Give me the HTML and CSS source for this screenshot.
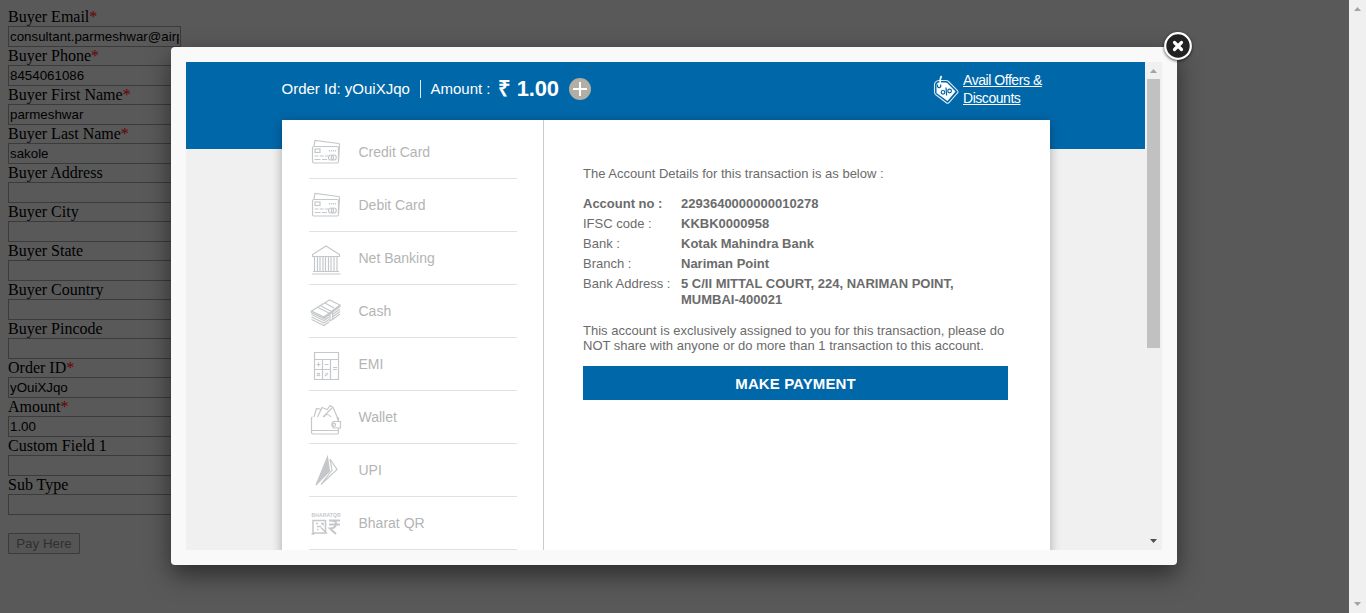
FILE: index.html
```html
<!DOCTYPE html>
<html lang="en">
<head>
<meta charset="utf-8">
<title>Payment</title>
<link rel="stylesheet" href="styles.css">
</head>
<body>
<div class="page">
  <form class="buyer">
    <label>Buyer Email<i>*</i></label><div class="input"><span>consultant.parmeshwar@airp</span></div>
    <label>Buyer Phone<i>*</i></label><div class="input"><span>8454061086</span></div>
    <label>Buyer First Name<i>*</i></label><div class="input"><span>parmeshwar</span></div>
    <label>Buyer Last Name<i>*</i></label><div class="input"><span>sakole</span></div>
    <label>Buyer Address</label><div class="input"></div>
    <label>Buyer City</label><div class="input"></div>
    <label>Buyer State</label><div class="input"></div>
    <label>Buyer Country</label><div class="input"></div>
    <label>Buyer Pincode</label><div class="input"></div>
    <label>Order ID<i>*</i></label><div class="input"><span>yOuiXJqo</span></div>
    <label>Amount<i>*</i></label><div class="input"><span>1.00</span></div>
    <label>Custom Field 1</label><div class="input"></div>
    <label>Sub Type</label><div class="input"></div>
    <div class="pay">Pay Here</div>
  </form>
  <div class="scrollbar page-scroll">
    <svg width="17" height="17"><path d="M5 11h7L8.500 7z" fill="#a3a3a3"/></svg>
    <svg width="17" height="17"><path d="M5 6h7L8.500 10z" fill="#a3a3a3"/></svg>
  </div>
</div>

<div class="modal">
  <svg class="close" width="36" height="36" viewBox="0 0 36 36">
    <circle cx="18" cy="18" r="12.800" fill="#222" stroke="#fff" stroke-width="2.200"/>
    <path d="M14.500 14.500l7 7m0-7l-7 7" stroke="#fff" stroke-width="3.200" stroke-linecap="round"/>
  </svg>
  <div class="frame">
    <div class="view">
      <header class="top">
        <div class="order">
          <span class="oid">Order Id: yOuiXJqo</span>
          <span class="amt">Amount :</span>
          <b>₹ 1.00</b>
          <svg width="22" height="22" viewBox="0 0 22 22"><circle cx="11" cy="11" r="11" fill="#b1aea5"/><path d="M11 4v14M4 11h14" stroke="#fff" stroke-width="2"/></svg>
        </div>
        <div class="offers">
          <svg width="26" height="30" viewBox="0 0 26 30">
            <path d="M1.500 9.500q0-3 4-4l7.500 0q1.500 0 2.500 1l9 9q1 1.500 0 2.500l-8.500 9.500q-1.500 1.500-3 0L2.500 19.500q-1-1-1-2.500z" fill="none" stroke="#d5e7f3" stroke-width="1.100"/>
            <path d="M3.500 10q0-2 2-2.500h7q1.200 0 2 .8l8 8.200-8 9.500-11-8z" fill="#fff"/>
            <path d="M4.500 9.500v2.200q1.500 2 3.200 0V9.500" fill="none" stroke="#0067a9" stroke-width="1.200"/>
            <path d="M8.500 1Q6.500 4 7.500 9" fill="none" stroke="#fff" stroke-width="1.600"/>
            <g fill="none" stroke="#0067a9" stroke-width="1.200"><circle cx="10" cy="17.300" r="1.800"/><circle cx="16.600" cy="16" r="1.800"/><path d="M13 12.500l.6 8"/></g>
          </svg>
          <a>Avail Offers &amp;<br>Discounts</a>
        </div>
      </header>
      <main class="card">
        <ul class="methods">
          <li><svg class="ic" viewBox="0 0 32 32"><use href="#cards"/></svg>Credit Card</li>
          <li><svg class="ic" viewBox="0 0 32 32"><g id="cards"><path d="M4 10L5 4.300 28.500 7.500q1.300.3 1 1.500L28.500 24"/><rect x="2.500" y="10.500" width="26" height="16.500" rx="1.500"/><rect x="5" y="13" width="5" height="3.500"/><path d="M19.500 14v1.500m2-1.500v1.500m2-1.500v1.500m2-1.500v1.500M4.500 20h4m1.200 0h4m1.200 0h3M4.500 23.500h6m1.500 0h5"/><circle cx="21" cy="21.500" r="2.500"/><circle cx="23.800" cy="21.500" r="2.500"/></g></svg>Debit Card</li>
          <li><svg class="ic low" viewBox="0 0 32 32"><path d="M2.500 13.500V11.500L16 3l13.500 8.500v2zM4.500 14v14m3-14v14m2.500-14v14m3-14v14m2.500-14v14m3-14v14m2.500-14v14m3-14v14m3-14v14M3 28.500h26M2 31h28.500"/></svg>Net Banking</li>
          <li><svg class="ic low" viewBox="0 0 32 32"><path d="M1.500 15L19.500 4l10.500 5-16 12zM1.500 15v1.500l12.500 6 16-12V9M1.500 18.500l12.500 6 5-3.500M1.500 21l12.500 6 5-3.500M1.500 23.500l12.500 6 5-3.500M22.500 18.500L30 13M22.500 21L30 15.500M22.500 23.500L30 18M8 11.500l12 6V25l2.500-1.500V16L11 10m4-3l9 5"/></svg>Cash</li>
          <li><svg class="ic low" viewBox="0 0 32 32"><path d="M4.500 3.500h24v27h-24zM4.500 10.500h24M4.500 20.500h16M12.500 10.500v20m8-20v20M6.500 15.500h4m-2-2v4m6-2h4m4.500 3h4m-4 2h4M7 24l3 3m0-3l-3 3m8 0l3-3m-3 0h.6m2 3h.6"/></svg>EMI</li>
          <li><svg class="ic lower" viewBox="0 0 32 32"><path d="M2.500 14q-1 0-1 1.500v14q0 1.500 1.500 1.500h24q1.500 0 1.500-1.500V25.500m0-7v-3q0-1.500-1.500-1.500zM23.500 18.500h7v6.500h-7q-3.500-3.200 0-6.500zM4 14L6.500 5.500l5.500 1M7.500 14l4.500-9.500 5 2M17 7l3-4.500 3 2 4 9M13 14L22 5M14 14q3-5 7 0M2 27.500h26"/><circle cx="24" cy="21.800" r="1.500"/></svg>Wallet</li>
          <li><svg class="ic" viewBox="0 0 32 32"><path d="M17.500 3L19.500 17 6 31z" class="solid"/><path d="M20 5l7 10.500L11 30.500M20 5l2 11-11 14.500"/></svg>UPI</li>
          <li><svg class="ic lowest" viewBox="0 0 32 32"><text x="1.500" y="5.500" textLength="29" class="qr">BHARATQR</text><g stroke-width="1.500"><path d="M3 9.500h12.500V22H3zM6 12.500h2m3 0h2v2m-6 1h4m-4 3h1.500m2.500-2l6 6M1.500 23h3"/></g><path stroke-width="2" d="M19 9.500h11M19 13.500h11M20 9.500q7 0 6 4t-6 4l6 5.500"/></svg>Bharat QR</li>
        </ul>
        <section class="details">
          <p class="intro">The Account Details for this transaction is as below :</p>
          <dl>
            <dt class="strong">Account no :</dt><dd>2293640000000010278</dd>
            <dt>IFSC code :</dt><dd>KKBK0000958</dd>
            <dt>Bank :</dt><dd>Kotak Mahindra Bank</dd>
            <dt>Branch :</dt><dd>Nariman Point</dd>
            <dt>Bank Address :</dt><dd>5 C/II MITTAL COURT, 224, NARIMAN POINT,<br>MUMBAI-400021</dd>
          </dl>
          <p class="note">This account is exclusively assigned to you for this transaction, please do<br>NOT share with anyone or do more than 1 transaction to this account.</p>
          <div class="make">MAKE PAYMENT</div>
        </section>
      </main>
    </div>
    <div class="scrollbar">
      <svg width="17" height="17"><path d="M5 11h7L8.500 7z" fill="#a3a3a3"/></svg>
      <div class="thumb"></div>
      <svg width="17" height="17"><path d="M5 6h7L8.500 10z" fill="#505050"/></svg>
    </div>
  </div>
</div>
</body>
</html>
```
FILE: styles.css
```css
* { box-sizing: border-box; }
body { margin: 0; height: 613px; overflow: hidden; background: #595959; font-family: "Liberation Sans", Arial, sans-serif; }
.page { display: flex; justify-content: space-between; height: 613px; }
.buyer { padding: 8px 0 0 8px; width: 181px; }
.buyer label { display: block; height: 18px; font: 16px/18px "Liberation Serif", "Times New Roman", serif; color: #000; white-space: nowrap; }
.buyer i { font-style: normal; color: #6a0000; }
.input { width: 173px; height: 21px; border: 1px solid #3b3b3b; padding: 0 1px; overflow: hidden; font-size: 13.333px; line-height: 19px; color: #000; }
.input span { display: block; overflow: hidden; white-space: nowrap; }
.pay { margin-top: 18px; width: 72px; height: 21px; border: 1px solid #3b3b3b; border-radius: 1px; background: #555; color: #303030; font-size: 13.333px; line-height: 19px; text-align: center; }
.scrollbar { width: 17px; height: 100%; background: #f0f0f0; display: flex; flex-direction: column; }
.scrollbar svg { display: block; }
.scrollbar svg:last-child { margin-top: auto; }
.thumb { width: 13px; height: 269px; margin-left: 2px; background: #c1c1c1; }

.modal { position: absolute; left: 171px; top: 47px; width: 1006px; height: 518px; padding: 15px; background: #f9f9f9; border-radius: 4px; box-shadow: 0 10px 25px rgba(0,0,0,.5); }
.close { position: absolute; top: -19px; right: -19px; filter: drop-shadow(0 1px 1.500px rgba(0,0,0,.7)); }
.frame { display: flex; height: 488px; overflow: hidden; }
.view { width: 959px; height: 488px; overflow: hidden; background: #f0f0f0; }
.top { height: 87px; background: #0067a9; padding: 9px 96px 0 95px; display: flex; justify-content: space-between; color: #fff; }
.order { display: flex; align-items: center; height: 36px; font-size: 15px; }
.oid { width: 140px; padding-left: .5px; border-right: 1px solid #dce9f2; height: 18px; line-height: 17px; white-space: nowrap; }
.amt { width: 77px; padding: 0 0 1px 9.500px; line-height: 17px; white-space: nowrap; }
.order b { width: 71px; font-size: 22px; line-height: 36px; letter-spacing: -.2px; white-space: nowrap; }
.offers { display: flex; width: 117px; gap: 4px; font-size: 14px; line-height: 18px; }
.offers svg { margin: 4px 0 0 1px; }
.offers a { text-decoration: underline; white-space: nowrap; letter-spacing: -.45px; }
.card { display: flex; width: 768px; height: 470px; margin: -29px 0 0 96px; background: #fff; box-shadow: 0 2px 10px rgba(0,0,0,.3); }
.methods { list-style: none; margin: 0; padding: 6px 26px 0 27px; width: 262px; border-right: 1px solid #ccc; }
.methods li { height: 53px; border-bottom: 1px solid #dfe2e4; display: flex; align-items: center; font-size: 14px; color: #b4b4b4; gap: 16.500px; }
.ic { width: 32px; height: 32px; margin-left: 1px; fill: none; stroke: #c5c8ca; stroke-width: 1.200; overflow: visible; }
.ic.low { margin-top: 2px; }
.ic.lower { margin-top: 4px; }
.ic.lowest { margin-top: 7px; }
.ic .solid { fill: #c5c8ca; }
.qr { font-size: 5px; font-weight: bold; fill: #c5c8ca; stroke: none; }
.details { padding: 46px 0 0 39px; width: 464px; font-size: 13px; color: #6b6b6b; white-space: nowrap; }
.details p { margin: 0; line-height: 15px; }
.details dl { margin: 15px 0 0; display: grid; grid-template-columns: 98px 1fr; row-gap: 4px; line-height: 16px; }
.details dd { margin: 0; font-weight: bold; }
.strong { font-weight: bold; }
.details .note { margin-top: 15px; }
.make { margin-top: 13px; height: 34px; line-height: 35px; background: #0067a9; color: #fff; font-size: 15px; letter-spacing: .1px; font-weight: bold; text-align: center; }
```
